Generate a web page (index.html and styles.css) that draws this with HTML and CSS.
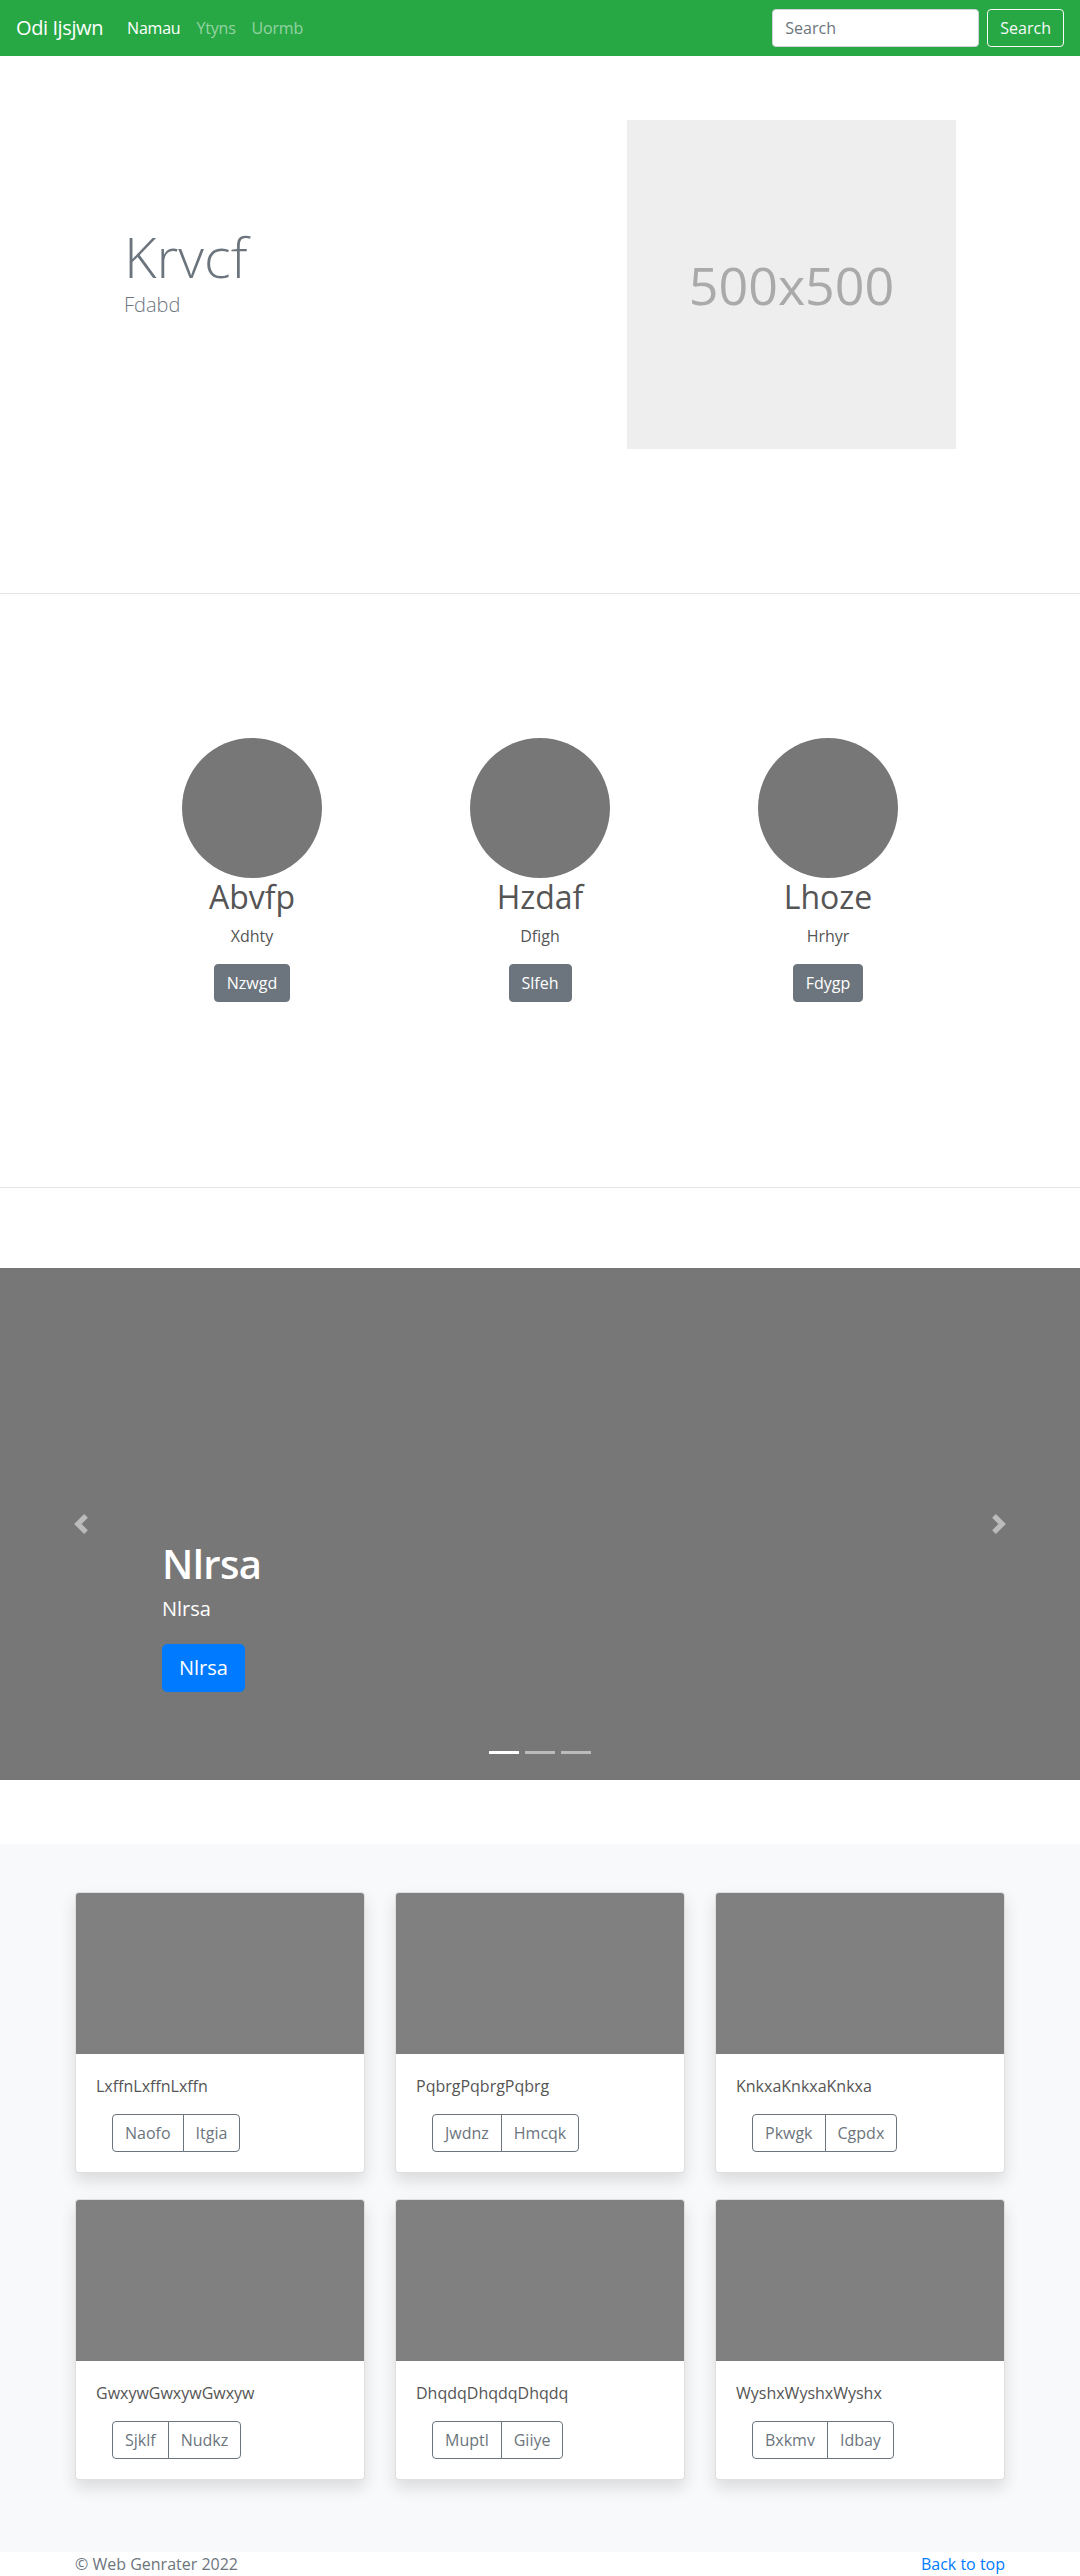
FILE: index.html
```html
<!DOCTYPE html>
<html lang="en">
<head>
<meta charset="utf-8">
<title>Odi Ijsjwn</title>
<link rel="stylesheet" href="styles.css">
</head>
<body>
<nav class="navbar">
  <a class="brand" href="#">Odi Ijsjwn</a>
  <ul class="nav-links">
    <li><a class="nav-link active" href="#">Namau</a></li>
    <li><a class="nav-link" href="#">Ytyns</a></li>
    <li><a class="nav-link" href="#">Uormb</a></li>
  </ul>
  <form class="search">
    <input class="search-input" type="text" placeholder="Search">
    <button class="search-btn" type="button">Search</button>
  </form>
</nav>

<section class="hero">
  <div class="hero-inner">
    <div class="hero-text">
      <h1 class="hero-title">Krvcf</h1>
      <p class="hero-lead">Fdabd</p>
    </div>
    <div class="placeholder">500x500</div>
  </div>
</section>

<section class="team">
  <div class="team-grid">
    <div class="member">
      <div class="avatar"></div>
      <h2 class="member-name">Abvfp</h2>
      <p class="member-text">Xdhty</p>
      <a class="btn-secondary" href="#">Nzwgd</a>
    </div>
    <div class="member">
      <div class="avatar"></div>
      <h2 class="member-name">Hzdaf</h2>
      <p class="member-text">Dfigh</p>
      <a class="btn-secondary" href="#">Slfeh</a>
    </div>
    <div class="member">
      <div class="avatar"></div>
      <h2 class="member-name">Lhoze</h2>
      <p class="member-text">Hrhyr</p>
      <a class="btn-secondary" href="#">Fdygp</a>
    </div>
  </div>
</section>

<div class="carousel">
  <a class="carousel-control prev" href="#">
    <svg class="chevron" viewBox="0 0 8 8" width="20" height="20"><path d="M5.25 0l-4 4 4 4 1.5-1.5L4.25 4l2.5-2.5L5.25 0z" fill="#fff"/></svg>
  </a>
  <div class="carousel-caption">
    <h1 class="caption-title">Nlrsa</h1>
    <p class="caption-text">Nlrsa</p>
    <div><a class="btn-primary-lg" href="#">Nlrsa</a></div>
  </div>
  <a class="carousel-control next" href="#">
    <svg class="chevron" viewBox="0 0 8 8" width="20" height="20"><path d="M2.75 0l-1.5 1.5L3.75 4l-2.5 2.5L2.75 8l4-4-4-4z" fill="#fff"/></svg>
  </a>
  <ol class="indicators">
    <li class="indicator active"></li>
    <li class="indicator"></li>
    <li class="indicator"></li>
  </ol>
</div>

<section class="album">
  <div class="album-grid">
    <div class="card">
      <div class="card-img"></div>
      <div class="card-body">
        <p class="card-text">LxffnLxffnLxffn</p>
        <div class="btn-group"><a class="btn-outline" href="#">Naofo</a><a class="btn-outline" href="#">Itgia</a></div>
      </div>
    </div>
    <div class="card">
      <div class="card-img"></div>
      <div class="card-body">
        <p class="card-text">PqbrgPqbrgPqbrg</p>
        <div class="btn-group"><a class="btn-outline" href="#">Jwdnz</a><a class="btn-outline" href="#">Hmcqk</a></div>
      </div>
    </div>
    <div class="card">
      <div class="card-img"></div>
      <div class="card-body">
        <p class="card-text">KnkxaKnkxaKnkxa</p>
        <div class="btn-group"><a class="btn-outline" href="#">Pkwgk</a><a class="btn-outline" href="#">Cgpdx</a></div>
      </div>
    </div>
    <div class="card">
      <div class="card-img"></div>
      <div class="card-body">
        <p class="card-text">GwxywGwxywGwxyw</p>
        <div class="btn-group"><a class="btn-outline" href="#">Sjklf</a><a class="btn-outline" href="#">Nudkz</a></div>
      </div>
    </div>
    <div class="card">
      <div class="card-img"></div>
      <div class="card-body">
        <p class="card-text">DhqdqDhqdqDhqdq</p>
        <div class="btn-group"><a class="btn-outline" href="#">Muptl</a><a class="btn-outline" href="#">Giiye</a></div>
      </div>
    </div>
    <div class="card">
      <div class="card-img"></div>
      <div class="card-body">
        <p class="card-text">WyshxWyshxWyshx</p>
        <div class="btn-group"><a class="btn-outline" href="#">Bxkmv</a><a class="btn-outline" href="#">Idbay</a></div>
      </div>
    </div>
  </div>
</section>

<footer class="footer">
  <div class="footer-inner">
    <a class="back-top" href="#">Back to top</a>
    <p class="copyright">© Web Genrater 2022</p>
  </div>
</footer>
</body>
</html>
```

FILE: styles.css
```css
* { box-sizing: border-box; }

body {
  margin: 0;
  font-family: "Open Sans", "Noto Sans", "Liberation Sans", sans-serif;
  font-size: 16px;
  line-height: 1.5;
  color: #212529;
  background: #fff;
}

a { text-decoration: none; }

/* Navbar */
.navbar {
  display: flex;
  align-items: center;
  height: 56px;
  padding: 0 16px;
  background: #28a745;
}
.brand {
  font-size: 20px;
  line-height: 30px;
  letter-spacing: -0.4px;
  color: #fff;
  margin-right: 16px;
}
.nav-links {
  display: flex;
  list-style: none;
  margin: 0;
  padding: 0;
}
.nav-link {
  display: block;
  padding: 8px;
  letter-spacing: -0.2px;
  color: rgba(255, 255, 255, 0.5);
}
.nav-link.active { color: #fff; }
.search {
  margin: 0 0 0 auto;
  display: flex;
  gap: 8px;
}
.search-input {
  width: 207px;
  height: 38px;
  padding: 6px 12px;
  border: 1px solid #ced4da;
  border-radius: 4px;
  font-family: inherit;
  font-size: 16px;
  color: #495057;
  background: #fff;
}
.search-input::placeholder { color: #6c757d; }
.search-btn {
  height: 38px;
  padding: 6px 12px;
  border: 1px solid #f8f9fa;
  border-radius: 4px;
  background: transparent;
  color: #f8f9fa;
  font-family: inherit;
  font-size: 16px;
  line-height: 24px;
}

/* Hero */
.hero {
  padding: 64px 0 144px;
  border-bottom: 1px solid rgba(0, 0, 0, 0.1);
}
.hero-inner {
  width: 960px;
  margin: 0 auto;
  display: flex;
  justify-content: space-between;
  align-items: flex-start;
}
.hero-text {
  padding-left: 64px;
  margin-top: 103px;
}
.hero-title {
  margin: 0;
  font-size: 56px;
  font-weight: 300;
  line-height: 1.2;
  color: #6c757d;
}
.hero-lead {
  margin: 0;
  font-size: 20px;
  font-weight: 300;
  line-height: 30px;
  color: #6c757d;
}
.placeholder {
  width: 329px;
  height: 329px;
  margin-right: 64px;
  background: #eeeeee;
  color: #aaaaaa;
  font-size: 52px;
  display: flex;
  align-items: center;
  justify-content: center;
}

/* Team */
.team {
  padding: 144px 0 185px;
  border-bottom: 1px solid rgba(0, 0, 0, 0.1);
  margin-bottom: 80px;
}
.team-grid {
  width: 864px;
  margin: 0 auto;
  display: grid;
  grid-template-columns: repeat(3, 1fr);
  text-align: center;
}
.avatar {
  width: 140px;
  height: 140px;
  border-radius: 50%;
  background: #777;
  margin: 0 auto;
}
.member-name {
  margin: 0 0 8px;
  font-size: 32px;
  font-weight: 400;
  line-height: 1.2;
  color: #555;
}
.member-text {
  margin: 0 0 16px;
  color: #555;
}
.btn-secondary {
  display: inline-block;
  padding: 6px 12px;
  border: 1px solid #6c757d;
  border-radius: 4px;
  background: #6c757d;
  color: #fff;
  line-height: 24px;
}

/* Carousel */
.carousel {
  position: relative;
  height: 512px;
  background: #777;
  margin-bottom: 64px;
}
.carousel-control {
  position: absolute;
  top: 0;
  bottom: 0;
  width: 15%;
  display: flex;
  align-items: center;
  justify-content: center;
  opacity: 0.5;
}
.carousel-control.prev { left: 0; }
.carousel-control.next { right: 0; }
.chevron { display: block; }
.carousel-caption {
  position: absolute;
  left: 15%;
  right: 15%;
  bottom: 88px;
  color: #fff;
}
.caption-title {
  margin: 0 0 6px;
  font-size: 40px;
  font-weight: 600;
  letter-spacing: -0.6px;
  line-height: 48px;
}
.caption-text {
  margin: 0 0 20px;
  font-size: 20px;
  line-height: 30px;
}
.btn-primary-lg {
  display: inline-block;
  padding: 8px 16px;
  border: 1px solid #007bff;
  border-radius: 5px;
  background: #007bff;
  color: #fff;
  font-size: 20px;
  line-height: 30px;
}
.indicators {
  position: absolute;
  left: 0;
  right: 0;
  bottom: 26px;
  margin: 0;
  padding: 0;
  list-style: none;
  display: flex;
  justify-content: center;
}
.indicator {
  width: 30px;
  height: 3px;
  margin: 0 3px;
  background: rgba(255, 255, 255, 0.5);
}
.indicator.active { background: #fff; }

/* Album */
.album {
  background: #f8f9fa;
  padding: 48px 0 72px;
}
.album-grid {
  width: 930px;
  margin: 0 auto;
  display: grid;
  grid-template-columns: repeat(3, 1fr);
  column-gap: 30px;
  row-gap: 26px;
}
.card {
  background: #fff;
  border: 1px solid rgba(0, 0, 0, 0.125);
  border-radius: 4px;
  overflow: hidden;
  box-shadow: 0 8px 16px rgba(0, 0, 0, 0.12);
}
.card-img {
  height: 161px;
  background: #808080;
}
.card-body {
  padding: 20px;
}
.card-text {
  margin: 0 0 16px;
  color: #555;
}
.btn-group {
  display: inline-flex;
  margin-left: 16px;
}
.btn-outline {
  display: inline-block;
  padding: 6px 12px;
  border: 1px solid #6c757d;
  color: #6c757d;
  line-height: 24px;
}
.btn-outline:first-child { border-radius: 4px 0 0 4px; }
.btn-outline:last-child { border-radius: 0 4px 4px 0; margin-left: -1px; }

/* Footer */
.footer {
  color: #6c757d;
  padding-bottom: 48px;
}
.footer-inner {
  width: 930px;
  margin: 0 auto;
}
.back-top {
  float: right;
  color: #007bff;
}
.copyright { margin: 0; }
```
